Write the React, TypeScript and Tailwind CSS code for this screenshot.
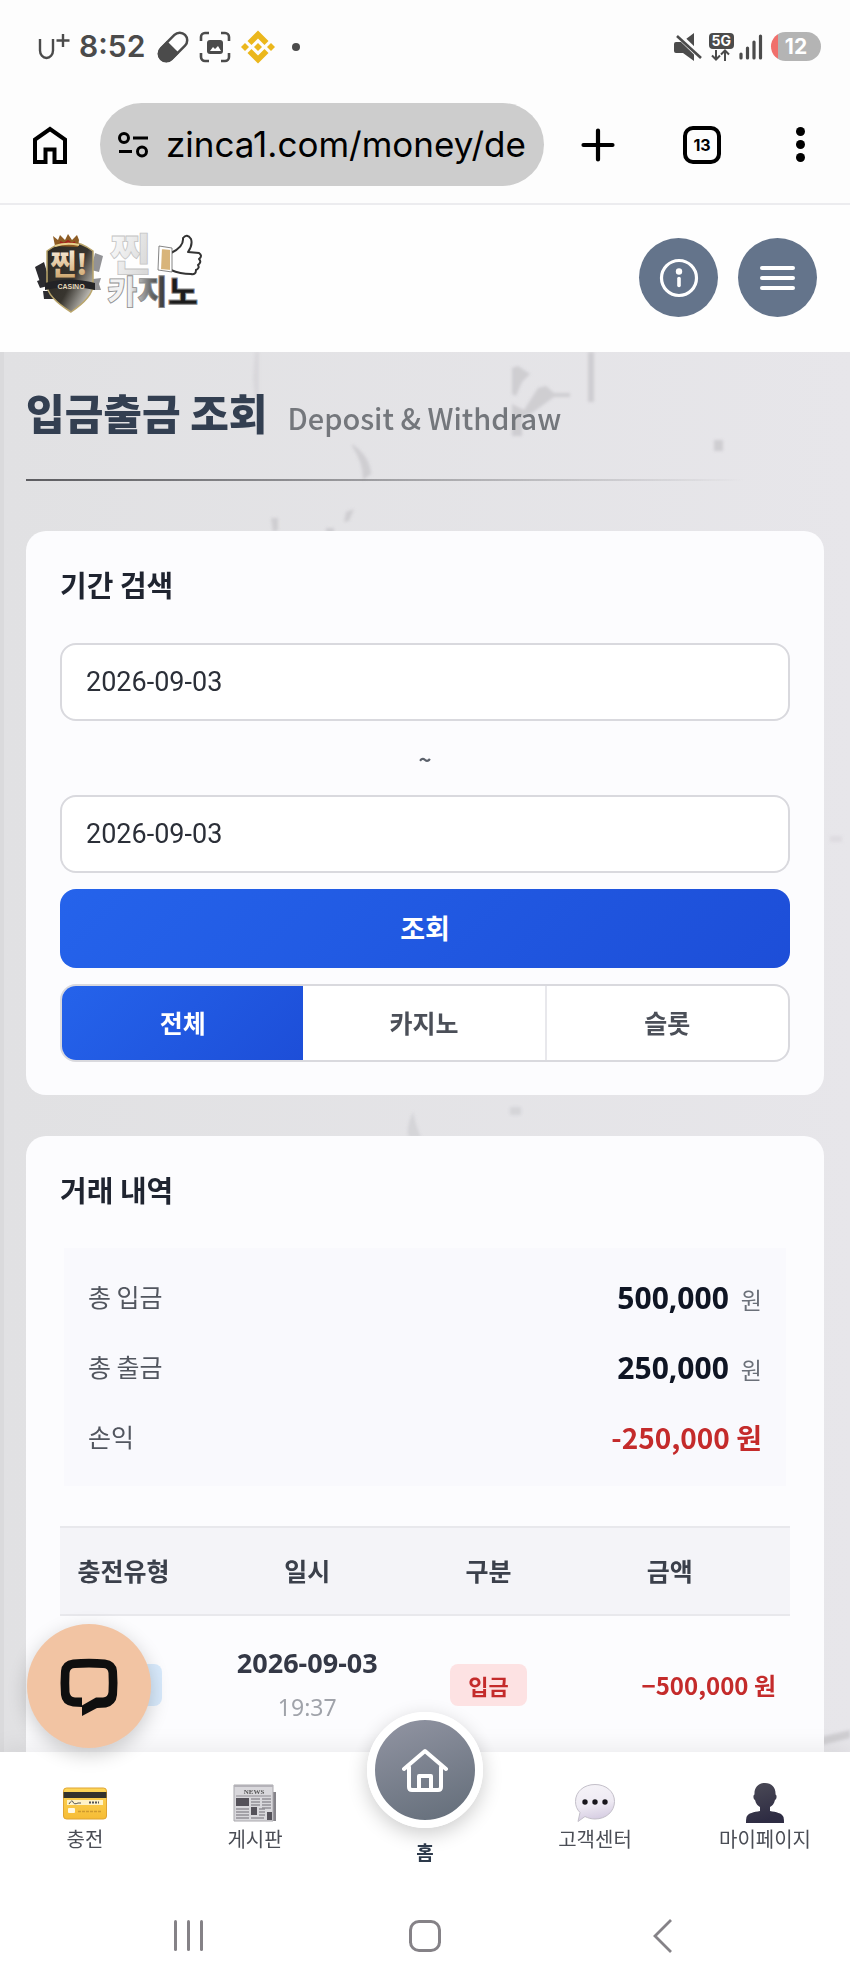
import React from "react";

interface SummaryRow {
  label: string;
  value: string;
  unit: string;
  negative?: boolean;
}

interface Tx {
  date: string;
  time: string;
  kind: string;
  amount: string;
}

interface NavItem {
  label: string;
  icon: React.ReactNode;
}

const summary: SummaryRow[] = [
  { label: "총 입금", value: "500,000", unit: "원" },
  { label: "총 출금", value: "250,000", unit: "원" },
  { label: "손익", value: "-250,000", unit: "원", negative: true },
];

const rows: Tx[] = [
  { date: "2026-09-03", time: "19:37", kind: "입금", amount: "−500,000 원" },
];

const tabs = ["전체", "카지노", "슬롯"];

// ---------- phone status bar ----------

const StatusBar = () => (
  <div className="flex h-[93px] items-center justify-between pr-[29px] pl-[37px] text-[#4b4b4b]">
    <div className="flex items-center">
      <svg className="h-[28px] w-[34px]" viewBox="0 0 34 28" fill="none" stroke="currentColor" strokeWidth="2.4">
        <path d="M3 6v11.500a6.500 7.500 0 0 0 13 0V6" />
        <path d="M26 1v13M19.500 7.500h13" />
      </svg>
      <span className="ml-2 font-['Inter'] text-[30px] font-semibold">8:52</span>
      <svg className="ml-3 h-[32px] w-[32px]" viewBox="0 0 32 32">
        <g transform="rotate(45 16 16)">
          <rect x="8.500" y="-1" width="15" height="34" rx="7.500" fill="none" stroke="currentColor" strokeWidth="2.500" />
          <path d="M7.500 16h17v9.500a8.500 8.500 0 0 1-17 0z" fill="currentColor" />
        </g>
      </svg>
      <svg className="ml-[10px] h-[32px] w-[32px]" viewBox="0 0 32 32" fill="none" stroke="currentColor" strokeWidth="2.600">
        <path d="M2 10V6a4 4 0 0 1 4-4h4M22 2h4a4 4 0 0 1 4 4v4M30 22v4a4 4 0 0 1-4 4h-4M10 30H6a4 4 0 0 1-4-4v-4" />
        <rect x="8" y="9" width="16" height="14" rx="3" fill="currentColor" stroke="none" />
        <path d="M11 20l3-4 2 2 3-3 3 5z" fill="#fff" stroke="none" />
      </svg>
      <svg className="ml-[10px] h-[34px] w-[34px]" viewBox="0 0 34 34" fill="#ebb71c">
        <path d="M17 0.500l10.500 10.500-4 4L17 8.500 10.500 15l-4-4z" />
        <path d="M17 33.500L6.500 23l4-4 6.500 6.500 6.500-6.500 4 4z" />
        <path d="M4 13l4 4-4 4-4-4zM30 13l4 4-4 4-4-4zM17 13l4 4-4 4-4-4z" />
      </svg>
      <span className="ml-[17px] h-[8px] w-[8px] rounded-full bg-[#4b4b4b]" />
    </div>
    <div className="flex items-center">
      <svg className="h-[28px] w-[28px]" viewBox="0 0 28 28" fill="currentColor">
        <path d="M2 9h6l12-9v28l-11-8H2a2 2 0 0 1-2-2v-7a2 2 0 0 1 2-2z" />
        <path d="M2 0l26 25" stroke="#fdfdfd" strokeWidth="6" />
        <path d="M3 3l24 22" stroke="currentColor" strokeWidth="2.600" />
      </svg>
      <div className="ml-[7px] flex flex-col items-center">
        <span className="rounded-[4px] bg-[#4b4b4b] px-[3px] font-['Inter'] text-[14px] leading-[16px] font-bold text-white">5G</span>
        <svg className="h-[12px] w-[20px]" viewBox="0 0 20 12" fill="none" stroke="currentColor" strokeWidth="2">
          <path d="M5 1v9M1 6.500l4 4 4-4M14 12V2M10 5.500l4-4 4 4" />
        </svg>
      </div>
      <svg className="ml-[5px] h-[26px] w-[24px]" viewBox="0 0 24 26" stroke="currentColor" strokeWidth="3.200" strokeLinecap="round">
        <path d="M2 20v4M8.500 14v10M15 8v16M21.500 2v22" />
      </svg>
      <span className="ml-[8px] flex h-[29px] w-[50px] items-center justify-center rounded-full bg-linear-to-r from-[#f0706c] from-15% to-[#b4b4b4] to-15% font-['Inter'] text-[21px] font-bold text-white">
        12
      </span>
    </div>
  </div>
);

// ---------- browser toolbar ----------

const BrowserBar = () => (
  <div className="flex h-[112px] items-center border-b-2 border-[#ececef] pr-[45px] pb-[7px] pl-[33px]">
    <button aria-label="홈페이지">
      <svg className="h-[38px] w-[34px]" viewBox="0 0 34 38" fill="none" stroke="#000" strokeWidth="4">
        <path d="M2 36V13.500L17 3l15 10.500V36H21.500V23.500h-9V36z" />
      </svg>
    </button>
    <div className="ml-[33px] flex h-[83px] min-w-0 flex-1 items-center rounded-full bg-[#cdcdcd] pr-[14px] pl-[17px]">
      <svg className="h-[28px] w-[32px] shrink-0" viewBox="0 0 32 28" fill="none" stroke="#000" strokeWidth="3">
        <circle cx="7" cy="7" r="4.500" />
        <path d="M16 7h15M2 20.500h13" />
        <circle cx="25" cy="20.500" r="4.500" />
      </svg>
      <input
        aria-label="주소"
        readOnly
        value="zinca1.com/money/de"
        className="ml-[17px] w-0 min-w-0 flex-1 bg-transparent font-['Inter'] text-[35px] text-black outline-none"
      />
    </div>
    <button aria-label="새 탭" className="ml-[36px]">
      <svg className="h-[36px] w-[36px]" viewBox="0 0 36 36" stroke="#000" strokeWidth="4.200" strokeLinecap="round">
        <path d="M18 3.500v29M3.500 18h29" />
      </svg>
    </button>
    <button
      aria-label="탭 13개"
      className="ml-[67px] flex h-[38px] w-[38px] items-center justify-center rounded-[10px] border-4 border-black font-['Inter'] text-[16px] font-bold"
    >
      13
    </button>
    <button aria-label="더보기" className="ml-[75px] flex flex-col gap-[4px]">
      <span className="h-[9px] w-[9px] rounded-full bg-black" />
      <span className="h-[9px] w-[9px] rounded-full bg-black" />
      <span className="h-[9px] w-[9px] rounded-full bg-black" />
    </button>
  </div>
);

// ---------- site header ----------

const Logo = () => (
  <svg className="h-[82px] w-[168px] overflow-visible" viewBox="0 0 168 82" role="img" aria-label="찐카지노">
    <defs>
      <linearGradient id="shield" x1="0" y1="0" x2="1" y2="0.800">
        <stop offset="0" stopColor="#2b2822" />
        <stop offset="0.600" stopColor="#38352f" />
        <stop offset="1" stopColor="#d8d6d0" />
      </linearGradient>
      <linearGradient id="gold" x1="0" y1="0" x2="0" y2="1">
        <stop offset="0" stopColor="#fffaf0" />
        <stop offset="1" stopColor="#c99c5c" />
      </linearGradient>
      <linearGradient id="silver" x1="0" y1="0" x2="1" y2="0.600">
        <stop offset="0" stopColor="#ffffff" />
        <stop offset="1" stopColor="#d9d9d9" />
      </linearGradient>
      <linearGradient id="metal" x1="72" y1="0" x2="160" y2="0" gradientUnits="userSpaceOnUse">
        <stop offset="0.250" stopColor="#f2f2f2" />
        <stop offset="0.500" stopColor="#6a6a6a" />
        <stop offset="0.750" stopColor="#1c1c1c" />
      </linearGradient>
    </defs>
    {/* cards and chips behind the shield */}
    <path d="M0 34l9-5 6 20-9 3zM2 48l9-3 2 8-8 2zM8 58h10v8H9z" fill="#2c2c30" />
    <path d="M60 20l8 3-4 16-8-2zM58 46l8-1-2 6 2 6h-10z" fill="#77777b" opacity="0.800" />
    <path d="M12 18q12-9 23-9t23 9v34q0 12-22 27Q12 64 12 52z" fill="url(#shield)" stroke="#b9a56b" strokeWidth="1.500" />
    <path d="M20 13L18 3l5 4 2-5 5 5 3-6 4 6 5-5 2 5-1 7z" fill="#8d5c24" />
    <path d="M25 9l4 2 4-3 4 3 3-2" stroke="#a3231c" strokeWidth="2" fill="none" />
    <path d="M20 13q12-4 24-1" stroke="#e8cf8b" strokeWidth="2" fill="none" />
    <text x="34" y="42" textAnchor="middle" fontFamily="Noto Sans CJK KR, sans-serif" fontWeight="900" fontSize="28" fill="url(#gold)">
      찐!
    </text>
    <path d="M10 50q24-7 50 0v7q-25-6-50 0z" fill="#232326" />
    <text x="36" y="56" textAnchor="middle" fontFamily="Liberation Sans, sans-serif" fontWeight="700" fontSize="7" fill="#e4d7bb">
      CASINO
    </text>
    <text x="75" y="38" fontFamily="Noto Sans CJK KR, sans-serif" fontWeight="900" fontSize="44" fill="url(#silver)" stroke="#c4c4c4" strokeWidth="0.800">
      찐
    </text>
    <text x="72" y="71" fontFamily="Noto Sans CJK KR, sans-serif" fontWeight="900" fontSize="33" fill="url(#metal)" stroke="#8d8d8d" strokeWidth="0.800">
      카지노
    </text>
    {/* thumbs up */}
    <path
      d="M136 20Q149 14 148 5q4-5 8 1 2 6-3 13l11 1q4 3 0 6 3 3-1 6 2 3-2 5 0 5-5 4-11 0-20-4z"
      fill="#fff"
      stroke="#333"
      strokeWidth="2"
      strokeLinejoin="round"
    />
    <path d="M126 15l10 1v22l-11-1z" fill="#d8b47a" stroke="#fff" strokeWidth="2" />
    <path d="M124 13l13 2v24l-14-2z" fill="none" stroke="#666" strokeWidth="0.800" />
  </svg>
);

const SiteHeader = () => (
  <header className="flex h-[147px] items-center justify-between bg-[#fefefe] pr-[33px] pb-[2px] pl-[35px]">
    <a href="#" className="-mt-2">
      <Logo />
    </a>
    <div className="flex gap-5">
      <button aria-label="정보" className="flex h-[79px] w-[79px] items-center justify-center rounded-full bg-[#64748b]">
        <svg className="h-[40px] w-[40px]" viewBox="0 0 40 40" fill="none" stroke="#fff">
          <circle cx="20" cy="20" r="17.500" strokeWidth="3.200" />
          <circle cx="20" cy="13.500" r="3.200" fill="#fff" stroke="none" />
          <path d="M20 20.500v7" strokeWidth="3.600" strokeLinecap="round" />
        </svg>
      </button>
      <button aria-label="메뉴" className="flex h-[79px] w-[79px] flex-col items-center justify-center gap-[6px] rounded-full bg-[#64748b]">
        <span className="h-[4px] w-[35px] rounded-full bg-white" />
        <span className="h-[4px] w-[35px] rounded-full bg-white" />
        <span className="h-[4px] w-[35px] rounded-full bg-white" />
      </button>
    </div>
  </header>
);

// faint cracked plaster behind the cards
const Texture = () => (
  <svg className="pointer-events-none absolute top-0 left-0 h-[1400px] w-[850px]" viewBox="0 0 850 1400">
    <defs>
      <filter id="soft">
        <feGaussianBlur stdDeviation="1.600" />
      </filter>
    </defs>
    <path d="M0 0h4v1400H0z" fill="#dadadc" />
    <g fill="#cfced1" filter="url(#soft)">
      <path d="M255 0h4v46h-4l-2-20z" opacity="0.500" />
      <path d="M512 16l6-2 12 8-8 8-6 14-4-2zM512 84V52l12 6 14-22 8-2 8 7h16v4h-16l-22 16-10 4v19z" />
      <path d="M588 0h6v50h-6z" />
      <path d="M352 92q18 12 19 30l-8 6q0-18-11-34z" />
      <path d="M271 166h7v12l-5 2zM272 198h7v7h-7zM346 160l8-3-5 12-5 1zM326 176h8v7h-8zM714 88h9v11h-9z" />
      <path d="M413 760q-8 18-4 25h12q-4-7-8-25zM510 755h11v8h-11z" opacity="0.700" />
      <path d="M800 1390l50-12v8l-40 10z" />
      <path d="M830 484h12v6h-12z" opacity="0.400" />
    </g>
  </svg>
);

// ---------- form ----------

const DateField = ({ label, value }: { label: string; value: string }) => (
  <input
    type="text"
    aria-label={label}
    defaultValue={value}
    className="h-[78px] w-full rounded-2xl border-2 border-[#d9d9de] bg-white px-6 font-['Roboto'] text-[27px] text-[#2b2f38] outline-none"
  />
);

const SearchCard = () => (
  <section className="rounded-[20px] bg-[#fcfcfe] px-[34px] pt-8 pb-[33px]">
    <h2 className="text-[29px] leading-[42px] font-bold text-[#1f2430]">기간 검색</h2>
    <form className="mt-[38px] flex flex-col gap-4" onSubmit={(e) => e.preventDefault()}>
      <div className="flex flex-col">
        <DateField label="시작일" value="2026-09-03" />
        <span className="text-center text-[22px] leading-[74px] font-bold text-[#5b616b]">~</span>
        <DateField label="종료일" value="2026-09-03" />
      </div>
      <button className="h-[79px] rounded-2xl bg-linear-135 from-[#2563eb] to-[#1d4ed8] text-[27px] font-bold text-white">조회</button>
      <div className="flex h-[78px] overflow-hidden rounded-2xl border-2 border-[#d9d9de] bg-white">
        {tabs.map((t, i) => (
          <button
            key={t}
            type="button"
            className={
              i === 0
                ? "flex-1 bg-linear-135 from-[#2563eb] to-[#1d4ed8] text-[25px] font-bold text-white"
                : i === 1
                  ? "flex-1 text-[25px] font-bold text-[#4b4f58]"
                  : "flex-1 border-l-2 border-[#e8e8ec] text-[25px] font-bold text-[#4b4f58]"
            }
          >
            {t}
          </button>
        ))}
      </div>
    </form>
  </section>
);

// ---------- history ----------

const HistoryCard = () => (
  <section className="mt-[41px] rounded-[20px] bg-[#fcfcfe] px-[34px] pt-8 pb-[34px]">
    <h2 className="text-[29px] leading-[42px] font-bold text-[#1f2430]">거래 내역</h2>
    <dl className="mx-1 mt-[38px] bg-[#f9f9fd] px-6 py-[14px]">
      {summary.map((s) => (
        <div key={s.label} className="flex h-[70px] items-center justify-between">
          <dt className="text-[25px] text-[#52565f]">{s.label}</dt>
          {s.negative ? (
            <dd className="text-[28px] font-bold text-[#c42b2b]">
              {s.value} {s.unit}
            </dd>
          ) : (
            <dd className="text-[23px] text-[#6b7079]">
              <b className="mr-3 font-['Noto_Sans'] text-[30px] font-bold text-[#0f1524]">{s.value}</b>
              {s.unit}
            </dd>
          )}
        </div>
      ))}
    </dl>
    <table className="mt-10 w-full table-fixed text-center">
      <colgroup>
        <col className="w-[127px]" />
        <col />
        <col className="w-[122px]" />
        <col />
      </colgroup>
      <thead>
        <tr className="h-[88px] border-y-2 border-[#e8e8ec] bg-[#f4f4f8] text-[25px] text-[#3b404b]">
          <th className="font-bold whitespace-nowrap">충전유형</th>
          <th className="font-bold">일시</th>
          <th className="font-bold">구분</th>
          <th className="font-bold">금액</th>
        </tr>
      </thead>
      <tbody>
        {rows.map((r) => (
          <tr key={r.time} className="h-[138px]">
            <td>
              <span className="inline-block h-[42px] w-[76px] rounded-lg bg-[#d8eafc] align-middle" />
            </td>
            <td>
              <div className="font-['Noto_Sans'] text-[27px] leading-[44px] font-bold text-[#343846]">{r.date}</div>
              <div className="font-['Noto_Sans'] text-[23px] leading-[44px] text-[#a0a3aa]">{r.time}</div>
            </td>
            <td>
              <span className="inline-block rounded-lg bg-[#fde2e3] px-[18px] text-[22px] leading-[42px] font-bold text-[#c42b2b]">
                {r.kind}
              </span>
            </td>
            <td className="pr-[14px] text-right text-[24px] font-bold whitespace-nowrap text-[#c42b2b]">{r.amount}</td>
          </tr>
        ))}
      </tbody>
    </table>
  </section>
);

// ---------- bottom navigation ----------

const CardIcon = () => (
  <svg className="h-[40px] w-[44px]" viewBox="0 0 44 40">
    <defs>
      <linearGradient id="card" x1="0" y1="0" x2="0" y2="1">
        <stop offset="0" stopColor="#fdd65a" />
        <stop offset="1" stopColor="#f6bc35" />
      </linearGradient>
    </defs>
    <rect x="0.500" y="5" width="43" height="31" rx="3" fill="url(#card)" stroke="#dfa433" />
    <path d="M0.500 9h43v6h-43z" fill="#33322c" />
    <path d="M4 17h36v5H4z" fill="#fff3c9" />
    <path d="M6 21q3-5 4-2t5 1h3" stroke="#555" fill="none" />
    <path d="M26 19.500h10" stroke="#555" strokeWidth="2" strokeDasharray="2 1" />
    <rect x="5" y="25" width="7" height="5" rx="1" fill="#fff8e2" />
    <path d="M15 28.500h24" stroke="#cf9a2e" strokeWidth="1.500" strokeDasharray="3 1" />
  </svg>
);

const NewsIcon = () => (
  <svg className="h-[40px] w-[44px]" viewBox="0 0 44 40">
    <path d="M40 9h3v29H22z" fill="#86848a" />
    <path d="M1 2h39v36H1z" fill="#d9d8dc" stroke="#a9a8ad" />
    <path d="M1 2h39v2H1z" fill="#b4b2b8" />
    <text x="21" y="11" textAnchor="middle" fontFamily="Liberation Serif, serif" fontWeight="700" fontSize="7" fill="#555">
      NEWS
    </text>
    <path d="M3 13h35" stroke="#8f8d93" />
    <path d="M3 15h13v8H3zM18 24h6v8h-6zM34 29h5v8h-5z" fill="#55525a" />
    <path d="M18 16h9M18 19h9M18 22h9M29 16h9M29 19h9M29 22h9M29 25h9M3 26h13M3 29h13M3 32h13M3 35h13M18 35h13M26 26h6M26 29h6M26 32h6" stroke="#929096" strokeWidth="1.400" />
  </svg>
);

const TalkIcon = () => (
  <svg className="h-[40px] w-[44px]" viewBox="0 0 44 40">
    <defs>
      <linearGradient id="talk" x1="0" y1="0" x2="0.200" y2="1">
        <stop offset="0" stopColor="#f6f4f8" />
        <stop offset="0.600" stopColor="#eeeaf3" />
        <stop offset="1" stopColor="#d6cde2" />
      </linearGradient>
    </defs>
    <path d="M22 1.500c11 0 19.500 7 19.500 17S33 36 22 36c-4 0-7-1-10-2.500L5 38.500l2-9C4 26.500 2.500 23 2.500 18.500 2.500 8.500 11 1.500 22 1.500z" fill="url(#talk)" stroke="#c3bfc9" />
    <circle cx="12" cy="19" r="2.700" fill="#18161c" />
    <circle cx="22" cy="19" r="2.700" fill="#18161c" />
    <circle cx="32" cy="19" r="2.700" fill="#18161c" />
  </svg>
);

const UserIcon = () => (
  <svg className="h-[40px] w-[44px]" viewBox="0 0 44 40">
    <defs>
      <linearGradient id="user" x1="0" y1="0" x2="0.300" y2="1">
        <stop offset="0" stopColor="#4c4b57" />
        <stop offset="1" stopColor="#2e2c43" />
      </linearGradient>
    </defs>
    <path
      d="M22 0c7 0 11 5 10.500 11.500 1.500 0 1.500 5-0.500 5.500-1 4-3 6-5 7v4c6 1 12 2 13.500 6 0.500 2 0.500 4 0.500 6H3c0-2 0-4 0.500-6C5 30 11 29 17 28v-4c-2-1-4-3-5-7-2-0.500-2-5.500-0.500-5.500C11 5 15 0 22 0z"
      fill="url(#user)"
    />
  </svg>
);

const NavLink = ({ label, icon }: NavItem) => (
  <a href="#" className="flex flex-1 flex-col items-center gap-px pt-[31px] text-[20px] leading-[30px] text-[#4a4d55]">
    {icon}
    {label}
  </a>
);

const BottomNav = () => (
  <nav className="relative flex h-[128px] bg-white shadow-[0_-2px_24px_rgba(0,0,0,0.08)]">
    <NavLink label="충전" icon={<CardIcon />} />
    <NavLink label="게시판" icon={<NewsIcon />} />
    <a href="#" className="flex flex-1 flex-col items-center text-[19px] leading-[30px] font-bold text-[#2d3a4b]">
      <span className="-mt-[40px] mb-[9px] flex h-[116px] w-[116px] items-center justify-center rounded-full border-8 border-white bg-linear-160 from-[#9295a3] to-[#636d79] shadow-[0_6px_20px_rgba(0,0,0,0.2)]">
        <svg className="h-[46px] w-[46px]" viewBox="0 0 46 46" fill="none" stroke="#fff" strokeWidth="4" strokeLinecap="round" strokeLinejoin="round">
          <path d="M2 22L23 4l21 18M7 20v20q0 3 3 3h26q3 0 3-3V20" />
          <path d="M17 42V29h12v13" />
        </svg>
      </span>
      홈
    </a>
    <NavLink label="고객센터" icon={<TalkIcon />} />
    <NavLink label="마이페이지" icon={<UserIcon />} />
    <button
      aria-label="상담 채팅"
      className="absolute bottom-[132px] left-[27px] flex h-[124px] w-[124px] items-center justify-center rounded-full bg-[#f2c4a3] shadow-[0_6px_20px_rgba(0,0,0,0.2)]"
    >
      <svg className="mt-[2px] h-[58px] w-[58px]" viewBox="0 0 58 58">
        <path
          fillRule="evenodd"
          fill="#0f0f0f"
          d="M13 1.500Q29 0 45 1.500 56 3 57 13q1 12 0 24-1 10-11 12.500l-9 0.500L22 58v-9l-9-0.500Q2 47 1 37 0 25 1 13 2 3 13 1.500zM15 10q-5 0-5.500 5-0.500 10 0 19 0.500 5 5.500 5.500h7v8L36 39.500h7q5-0.500 5.500-5.500 0.500-9 0-19-0.500-5-5.500-5-14-1-28 0z"
        />
      </svg>
    </button>
  </nav>
);

const SystemNav = () => (
  <div className="relative grid h-[103px] grid-cols-[1fr_160px_1fr] items-center bg-white px-[174px] pt-[8px]">
    <button aria-label="최근 앱" className="flex gap-[10px]">
      <span className="h-[31px] w-[3px] rounded-full bg-[#858287]" />
      <span className="h-[31px] w-[3px] rounded-full bg-[#858287]" />
      <span className="h-[31px] w-[3px] rounded-full bg-[#858287]" />
    </button>
    <button aria-label="홈 화면" className="h-[32px] w-[32px] justify-self-center rounded-[10px] border-3 border-[#858287]" />
    <button aria-label="뒤로" className="justify-self-end">
      <svg className="h-[34px] w-[24px]" viewBox="0 0 24 34" fill="none" stroke="#858287" strokeWidth="2.800">
        <path d="M19 1L3 17l16 16" />
      </svg>
    </button>
  </div>
);

export default function App() {
  return (
    <div className="flex h-screen flex-col overflow-hidden bg-[#fdfdfd] font-['Noto_Sans_CJK_KR',sans-serif]">
      <StatusBar />
      <BrowserBar />
      <SiteHeader />
      <main className="relative min-h-0 flex-1 overflow-y-auto bg-linear-to-r from-[#e1e1e3] to-[#e7e6ea] [scrollbar-width:none]">
        <Texture />
        <div className="relative px-[26px]">
          <div className="flex h-[127px] items-center gap-5 pb-2">
            <h1 className="text-[42px] font-black text-[#333f51]">입금출금 조회</h1>
            <span className="pt-3 text-[29px] font-medium text-[#74777c]">Deposit &amp; Withdraw</span>
          </div>
          <div className="mb-[50px] h-[2px] bg-linear-to-r from-[#5c5c60] to-[#5c5c60]/0 to-90%" />
          <SearchCard />
          <HistoryCard />
        </div>
      </main>
      <BottomNav />
      <SystemNav />
    </div>
  );
}
